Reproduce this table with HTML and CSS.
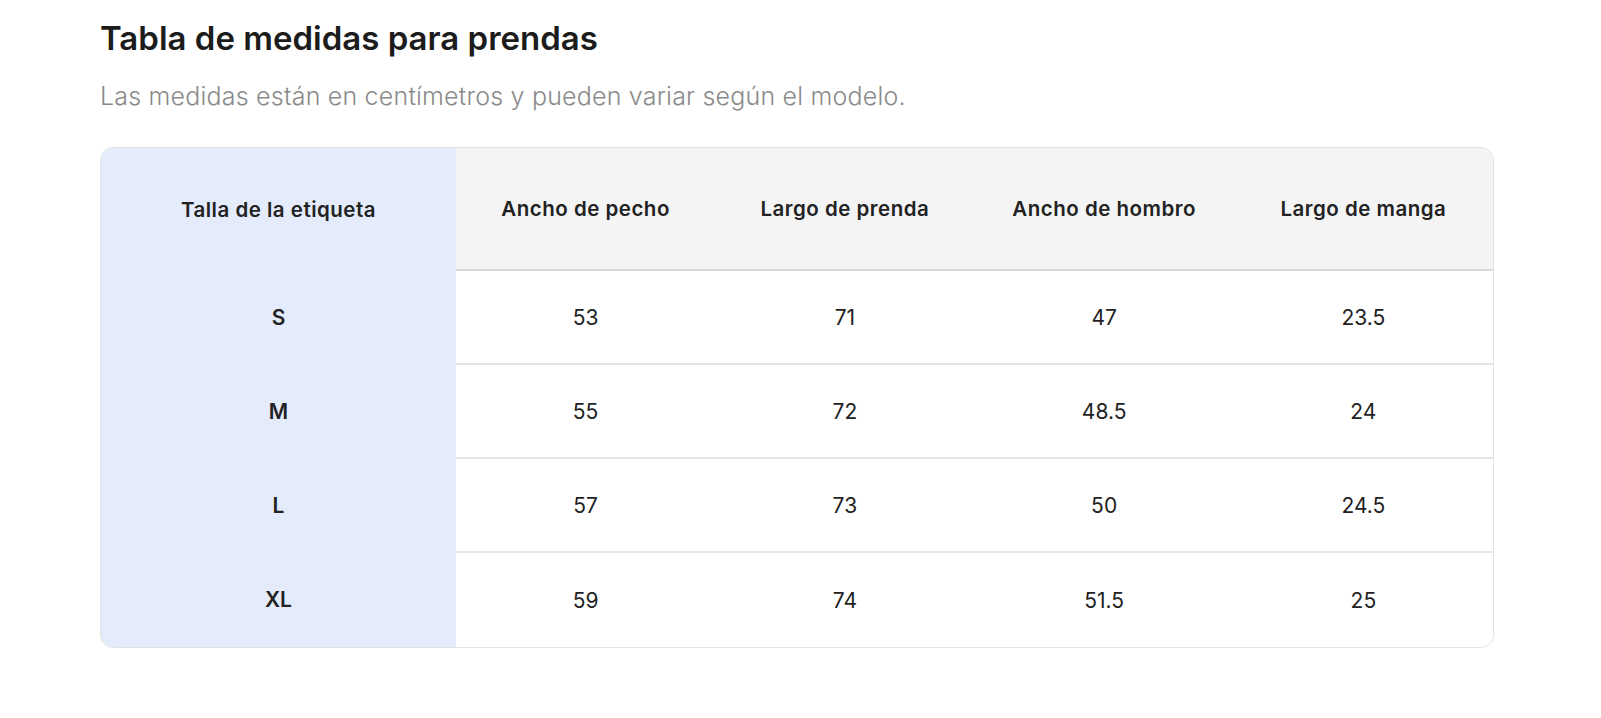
FILE: index.html
```html
<!DOCTYPE html>
<html lang="es">
<head>
<meta charset="utf-8">
<title>Tabla de medidas</title>
<link rel="stylesheet" href="styles.css">
</head>
<body>
<main class="page">
  <h1 class="title">Tabla de medidas para prendas</h1>
  <p class="subtitle">Las medidas están en centímetros y pueden variar según el modelo.</p>
  <div class="card">
    <table class="sizes">
      <thead>
        <tr>
          <th class="label">Talla de la etiqueta</th>
          <th>Ancho de pecho</th>
          <th>Largo de prenda</th>
          <th>Ancho de hombro</th>
          <th>Largo de manga</th>
        </tr>
      </thead>
      <tbody>
        <tr><td class="label">S</td><td>53</td><td>71</td><td>47</td><td>23.5</td></tr>
        <tr><td class="label">M</td><td>55</td><td>72</td><td>48.5</td><td>24</td></tr>
        <tr><td class="label">L</td><td>57</td><td>73</td><td>50</td><td>24.5</td></tr>
        <tr class="last"><td class="label">XL</td><td>59</td><td>74</td><td>51.5</td><td>25</td></tr>
      </tbody>
    </table>
  </div>
</main>
</body>
</html>
```

FILE: styles.css
```css
html, body {
  margin: 0;
  padding: 0;
  background: #ffffff;
}

body {
  font-family: "Inter", "Liberation Sans", sans-serif;
  color: #222222;
}

.page {
  padding: 18px 0 0 100px;
  width: 1394px;
}

.title {
  margin: 0;
  font-size: 33px;
  line-height: 40px;
  font-weight: 600;
  color: #1c1c1c;
}

.subtitle {
  margin: 22px 0 0 0;
  font-size: 25px;
  line-height: 32px;
  font-weight: 300;
  letter-spacing: 0.2px;
  color: #8a8a8a;
}

.card {
  margin-top: 35px;
  border: 1px solid #e2e2e2;
  border-radius: 13px;
  overflow: hidden;
}

.sizes {
  width: 100%;
  border-collapse: collapse;
  table-layout: fixed;
}

.sizes th,
.sizes td {
  padding: 0;
  text-align: center;
  vertical-align: middle;
}

.sizes th {
  height: 120px;
  background: #f4f4f4;
  border-bottom: 2px solid #d9d9d9;
  font-size: 20.5px;
  letter-spacing: 0.5px;
  font-weight: 600;
  color: #222222;
}

.sizes td {
  height: 92px;
  border-bottom: 2px solid #e6e6e6;
  font-size: 21px;
  font-weight: 400;
  color: #222222;
}

.sizes tr.last td {
  height: 94px;
  border-bottom: none;
}

.sizes .label {
  width: 355px;
  background: #e4ebfa;
  border-bottom: none;
  font-weight: 600;
}

.sizes thead .label {
  height: 122px;
  border-bottom: none;
}
```
